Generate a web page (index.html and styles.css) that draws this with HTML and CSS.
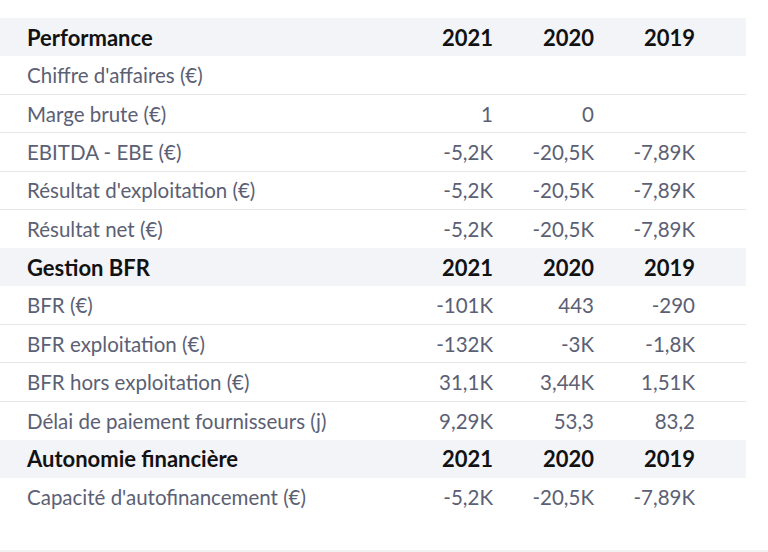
FILE: index.html
```html
<!DOCTYPE html>
<html lang="fr">
<head>
<meta charset="utf-8">
<link rel="stylesheet" href="styles.css">
</head>
<body>
<div class="page">
  <table class="fin">
    <colgroup><col class="c-label"><col class="c-num"><col class="c-num"><col class="c-num"><col class="c-pad"></colgroup>
    <tr class="head"><th>Performance</th><th>2021</th><th>2020</th><th>2019</th><th></th></tr>
    <tr><td>Chiffre d'affaires (€)</td><td></td><td></td><td></td><td></td></tr>
    <tr><td>Marge brute (€)</td><td>1</td><td>0</td><td></td><td></td></tr>
    <tr><td>EBITDA - EBE (€)</td><td>-5,2K</td><td>-20,5K</td><td>-7,89K</td><td></td></tr>
    <tr><td>Résultat d'exploitation (€)</td><td>-5,2K</td><td>-20,5K</td><td>-7,89K</td><td></td></tr>
    <tr class="last"><td>Résultat net (€)</td><td>-5,2K</td><td>-20,5K</td><td>-7,89K</td><td></td></tr>
    <tr class="head"><th>Gestion BFR</th><th>2021</th><th>2020</th><th>2019</th><th></th></tr>
    <tr><td>BFR (€)</td><td>-101K</td><td>443</td><td>-290</td><td></td></tr>
    <tr><td>BFR exploitation (€)</td><td>-132K</td><td>-3K</td><td>-1,8K</td><td></td></tr>
    <tr><td>BFR hors exploitation (€)</td><td>31,1K</td><td>3,44K</td><td>1,51K</td><td></td></tr>
    <tr class="last"><td>Délai de paiement fournisseurs (j)</td><td>9,29K</td><td>53,3</td><td>83,2</td><td></td></tr>
    <tr class="head"><th>Autonomie financière</th><th>2021</th><th>2020</th><th>2019</th><th></th></tr>
    <tr class="last"><td>Capacité d'autofinancement (€)</td><td>-5,2K</td><td>-20,5K</td><td>-7,89K</td><td></td></tr>
  </table>
  <div class="footer-line"></div>
</div>
</body>
</html>
```
FILE: styles.css
```css
html, body {
  margin: 0;
  padding: 0;
  background: #ffffff;
}
.page {
  width: 768px;
  height: 552px;
  box-sizing: border-box;
  padding-top: 18px;
  display: flex;
  flex-direction: column;
  font-family: Lato, "Liberation Sans", sans-serif;
}
.fin {
  width: 746px;
  border-collapse: collapse;
  table-layout: fixed;
}
.c-label { width: 392px; }
.c-num { width: 101px; }
.c-pad { width: 51px; }
.fin th, .fin td {
  height: 38.33px;
  box-sizing: border-box;
  padding: 0;
  font-size: 20.5px;
  white-space: nowrap;
  text-align: right;
}
.fin th:first-child, .fin td:first-child {
  text-align: left;
  padding-left: 27px;
}
.fin td {
  color: #5b6074;
  border-bottom: 1px solid #e6e7eb;
}
.fin tr.last td {
  border-bottom: none;
}
.fin tr.head th {
  background: #f3f4f8;
  color: #121212;
  font-weight: 700;
  font-size: 22px;
}
.footer-line {
  margin-top: auto;
  height: 2px;
  background: #f0f1f3;
}
```
